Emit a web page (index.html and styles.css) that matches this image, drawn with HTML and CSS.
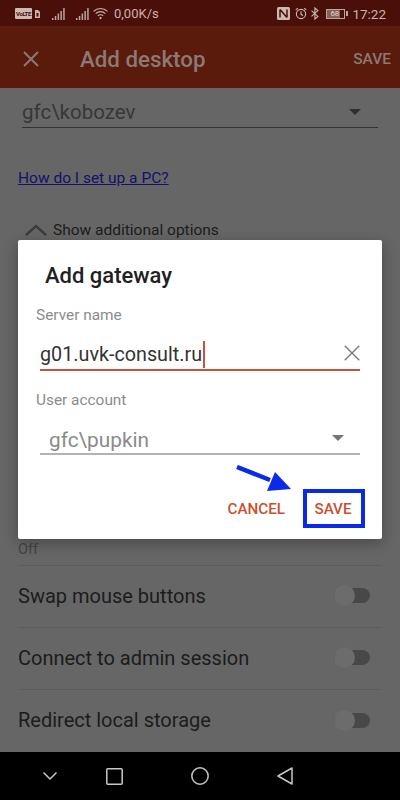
FILE: index.html
```html
<!DOCTYPE html>
<html lang="en">
<head>
    <meta charset="UTF-8">
    <meta name="viewport" content="width=device-width, initial-scale=1.0">
    <title>Add desktop</title>
    <link rel="stylesheet" href="styles.css">
</head>
<body>
<div class="phone">
    <!-- Status bar -->
    <div class="status">
        <div class="status-left">
            <span class="volte">VoLTE</span>
            <svg class="sim" width="5" height="8" viewBox="0 0 5 8"><path d="M0 0h3l2 2v6H0z" fill="#c9b2ac"/><rect x="1.5" y="3" width="2" height="3.5" fill="#4a0f08"/></svg>
            <svg class="signal first" width="13" height="12" viewBox="0 0 13 12"><g fill="#b9a39d"><rect x="0" y="10" width="1.5" height="2"/><rect x="2.8" y="8" width="1.5" height="4"/><rect x="5.6" y="5.5" width="1.5" height="6.5"/><rect x="8.4" y="3" width="1.5" height="9"/><rect x="11.2" y="0" width="1.5" height="12"/></g></svg>
            <svg class="signal second" width="13" height="12" viewBox="0 0 13 12"><g fill="#b9a39d"><rect x="0" y="10" width="1.5" height="2"/><rect x="2.8" y="8" width="1.5" height="4"/><rect x="5.6" y="5.5" width="1.5" height="6.5"/><rect x="8.4" y="3" width="1.5" height="9"/><rect x="11.2" y="0" width="1.5" height="12"/></g></svg>
            <svg class="wifi" width="15" height="13" viewBox="0 0 16 13"><g fill="none" stroke="#c9b2ac" stroke-width="1.2"><path d="M.6 4.2a10.4 10.4 0 0 1 14.8 0"/><path d="M2.9 6.6a7.2 7.2 0 0 1 10.2 0"/><path d="M5.2 9a3.9 3.9 0 0 1 5.6 0"/></g><circle cx="8" cy="11.4" r="1.2" fill="#c9b2ac"/></svg>
            <span class="speed">0,00K/s</span>
        </div>
        <div class="status-right">
            <svg class="nfc" width="13" height="13" viewBox="0 0 13 13"><rect width="13" height="13" rx="1.5" fill="#cdb8b2"/><path d="M3 2.5v8M3 2.5l7 8M10 2.5v8" fill="none" stroke="#4a0f08" stroke-width="1.5"/></svg>
            <svg class="alarm" width="12" height="13" viewBox="0 0 13 13"><g fill="none" stroke="#cdb8b2" stroke-width="1.2"><circle cx="6.5" cy="7" r="5"/><path d="M6.5 4v3.4l2.2 1.2M.8 2.6 3 .8M12.2 2.6 10 .8"/></g></svg>
            <svg class="bluetooth" width="10" height="13" viewBox="0 0 9 13"><path d="M1 3.6 7.4 9.4 4.4 12V1l3 2.6L1 9.4" fill="none" stroke="#cdb8b2" stroke-width="1.1"/></svg>
            <span class="battery"><span class="battery-level">68</span></span>
            <span class="battery-tip"></span>
            <span class="clock">17:22</span>
        </div>
    </div>

    <!-- App bar -->
    <header class="appbar">
        <svg class="close" width="16" height="16" viewBox="0 0 16 16"><path d="M1 1l14 14M15 1 1 15" stroke="#8b7a73" stroke-width="2"/></svg>
        <h1>Add desktop</h1>
        <a href="#" class="appbar-save">SAVE</a>
    </header>

    <!-- Form behind the dialog -->
    <main class="content">
        <div class="user-select">
            <span>gfc\kobozev</span>
            <span class="caret caret-dim"></span>
        </div>
        <a href="#" class="help-link">How do I set up a PC?</a>
        <div class="more-options">
            <svg width="24" height="12" viewBox="0 0 24 12"><path d="M2 11 12 2l10 9" fill="none" stroke="#3c3c3c" stroke-width="2.4"/></svg>
            <span>Show additional options</span>
        </div>
        <div class="hidden-part"></div>
        <div class="off">Off</div>
        <div class="row"><span>Swap mouse buttons</span><span class="toggle"></span></div>
        <div class="row"><span>Connect to admin session</span><span class="toggle"></span></div>
        <div class="row last"><span>Redirect local storage</span><span class="toggle"></span></div>
    </main>

    <!-- Nav bar -->
    <footer class="navbar">
        <svg width="16" height="10" viewBox="0 0 16 10"><path d="M1.5 1.5 8 8l6.5-6.5" fill="none" stroke="#c8c8c8" stroke-width="1.5"/></svg>
        <svg class="nav-square" width="17" height="17" viewBox="0 0 17 17"><rect x=".8" y=".8" width="15.4" height="15.4" rx="1" fill="none" stroke="#c8c8c8" stroke-width="1.5"/></svg>
        <svg class="nav-circle" width="18" height="18" viewBox="0 0 18 18"><circle cx="9" cy="9" r="8.2" fill="none" stroke="#c8c8c8" stroke-width="1.5"/></svg>
        <svg class="nav-back" width="16" height="18" viewBox="0 0 16 18"><path d="M15 1v16L1 9z" fill="none" stroke="#c8c8c8" stroke-width="1.5" stroke-linejoin="round"/></svg>
    </footer>

    <!-- Dialog -->
    <div class="dialog">
        <h2>Add gateway</h2>
        <label>Server name</label>
        <div class="input active">
            <span class="value">g01.uvk-consult.ru</span><span class="cursor"></span>
            <svg class="clear" width="16" height="16" viewBox="0 0 16 16"><path d="M.7.7l14.6 14.6M15.3.7.7 15.3" stroke="#757575" stroke-width="1.3"/></svg>
        </div>
        <label class="second-label">User account</label>
        <div class="input account">
            <span>gfc\pupkin</span>
            <span class="caret"></span>
        </div>
        <div class="actions">
            <a href="#" class="btn">CANCEL</a>
            <a href="#" class="btn btn-marked">SAVE</a>
        </div>
        <svg class="pointer" width="58" height="30" viewBox="0 0 58 30"><path d="M1 2 34 15" stroke="#0a2ae8" stroke-width="4.5"/><path d="M39 7 55 24 31 26z" fill="#0a2ae8"/></svg>
    </div>
</div>
</body>
</html>
```

FILE: styles.css
```css
* {
    box-sizing: border-box;
}

html, body {
    margin: 0;
    padding: 0;
}

body {
    font-family: Roboto, "Liberation Sans", sans-serif;
    background-color: #666;
}

a {
    text-decoration: none;
}

.phone {
    position: relative;
    width: 400px;
    height: 800px;
    display: flex;
    flex-direction: column;
    overflow: hidden;
}

/* Status bar */
.status {
    height: 26px;
    padding: 1px 14px 0 15px;
    background-color: #4a0f08;
    display: flex;
    align-items: center;
    justify-content: space-between;
    color: #c9b2ac;
}

.status-left, .status-right {
    display: flex;
    align-items: center;
}

.volte {
    width: 17px;
    height: 11px;
    background-color: #cdb8b2;
    color: #4a0f08;
    border-radius: 1px;
    font-size: 6px;
    font-weight: 700;
    line-height: 11px;
    text-align: center;
    overflow: hidden;
    white-space: nowrap;
    letter-spacing: -0.4px;
}

.sim {
    margin-left: 3px;
}

.signal.first {
    margin-left: 12px;
}

.signal.second {
    margin-left: 11px;
}

.wifi {
    margin-left: 4px;
}

.speed {
    margin-left: 6px;
    font-size: 13px;
}

.nfc {
    margin-right: 5px;
}

.alarm {
    margin-right: 3px;
}

.bluetooth {
    margin-right: 6px;
}

.battery {
    width: 19px;
    height: 10px;
    border: 1px solid #b9a39d;
    display: flex;
}

.battery-level {
    width: 13px;
    background-color: #8a5f55;
    color: #e2d4d0;
    font-size: 8px;
    line-height: 8px;
    padding-left: 3px;
    white-space: nowrap;
}

.battery-tip {
    width: 2px;
    height: 5px;
    margin-left: 1px;
    background-color: #b9a39d;
}

.clock {
    margin-left: 4px;
    font-size: 13.5px;
}

/* App bar */
.appbar {
    height: 62px;
    padding: 3px 9px 0 23px;
    background-color: #5a1a0c;
    display: flex;
    align-items: center;
}

.appbar h1 {
    margin: 0 0 0 41px;
    flex: 1;
    font-size: 22.3px;
    font-weight: 500;
    color: #8b7a73;
}

.appbar-save {
    font-size: 15.5px;
    font-weight: 500;
    color: #8b7a73;
}

/* Form behind the dialog */
.content {
    flex: 1;
    padding: 0 18px;
    background-color: #666;
    color: #1c1c1c;
    font-size: 20px;
}

.user-select {
    height: 40px;
    margin: 0 4px;
    padding: 12px 17px 0 0;
    border-bottom: 1px solid #333;
    display: flex;
    justify-content: space-between;
    color: #373737;
    font-size: 20.5px;
}

.caret {
    width: 0;
    height: 0;
    margin-top: 9px;
    border-left: 6px solid transparent;
    border-right: 6px solid transparent;
    border-top: 6px solid #757575;
}

.caret-dim {
    border-top-color: #2f2f2f;
}

.help-link {
    display: block;
    margin-top: 39px;
    font-size: 15.5px;
    line-height: 22px;
    color: #14106b;
    text-decoration: underline;
}

.more-options {
    margin-top: 29px;
    padding-left: 6px;
    height: 24px;
    display: flex;
    align-items: center;
    gap: 5px;
    font-size: 15.5px;
}

.hidden-part {
    height: 297px;
}

.off {
    height: 27px;
    padding-top: 1px;
    font-size: 14.5px;
    line-height: 20px;
    color: #444;
    border-bottom: 1px solid #5c5c5c;
}

.row {
    height: 62px;
    padding: 0 12px 2px 0;
    border-bottom: 1px solid #5c5c5c;
    display: flex;
    align-items: center;
    justify-content: space-between;
}

.row.last {
    border-bottom: none;
}

.toggle {
    position: relative;
    width: 36px;
    height: 15px;
    border-radius: 8px;
    background-color: #484848;
}

/* thumb hangs over the track */
.toggle::before {
    content: '';
    position: absolute;
    left: 0;
    top: -3px;
    width: 21px;
    height: 21px;
    border-radius: 50%;
    background-color: #6c6c6c;
}

/* Nav bar */
.navbar {
    height: 48px;
    padding-left: 42px;
    background-color: #000;
    display: flex;
    align-items: center;
}

.nav-square {
    margin-left: 48px;
}

.nav-circle {
    margin-left: 68px;
}

.nav-back {
    margin-left: 68px;
}

/* Dialog */
.dialog {
    position: absolute;
    left: 18px;
    top: 240px;
    width: 364px;
    height: 299px;
    padding: 22px 22px 0 18px;
    background-color: #fff;
    border-radius: 2px;
    box-shadow: 0 4px 14px rgba(0,0,0,0.3);
}

.dialog h2 {
    margin: 0 0 0 9px;
    font-size: 22px;
    line-height: 28px;
    font-weight: 500;
    color: #212121;
}

.dialog label {
    display: block;
    margin-top: 16px;
    font-size: 15.4px;
    line-height: 18px;
    color: #8c8c8c;
}

.dialog .second-label {
    margin-top: 20px;
}

.input {
    position: relative;
    margin-left: 4px;
    display: flex;
    align-items: center;
    color: #333;
}

.input.active {
    height: 40px;
    margin-top: 7px;
    padding-top: 8px;
    border-bottom: 2px solid #c4543a;
    font-size: 19.75px;
}

.cursor {
    width: 2px;
    height: 27px;
    margin-left: 1px;
    background-color: #c4543a;
}

.clear {
    margin-left: auto;
    margin-top: -3px;
}

.input.account {
    height: 37px;
    margin-top: 9px;
    padding: 9px 16px 0 9px;
    justify-content: space-between;
    border-bottom: 2px solid #b3b3b3;
    color: #8a8a8a;
    font-size: 20.8px;
}

.input.account .caret {
    margin-top: -4px;
}

.actions {
    margin-top: 34px;
    margin-right: -5px;
    display: flex;
    align-items: center;
    justify-content: flex-end;
    gap: 18px;
}

.btn {
    font-size: 15.2px;
    font-weight: 500;
    color: #c9502f;
}

.btn-marked {
    width: 62px;
    height: 39px;
    padding-right: 2px;
    border: 4px solid #0a2ae8;
    display: flex;
    align-items: center;
    justify-content: center;
}

.pointer {
    position: absolute;
    left: 218px;
    top: 225px;
}
```
